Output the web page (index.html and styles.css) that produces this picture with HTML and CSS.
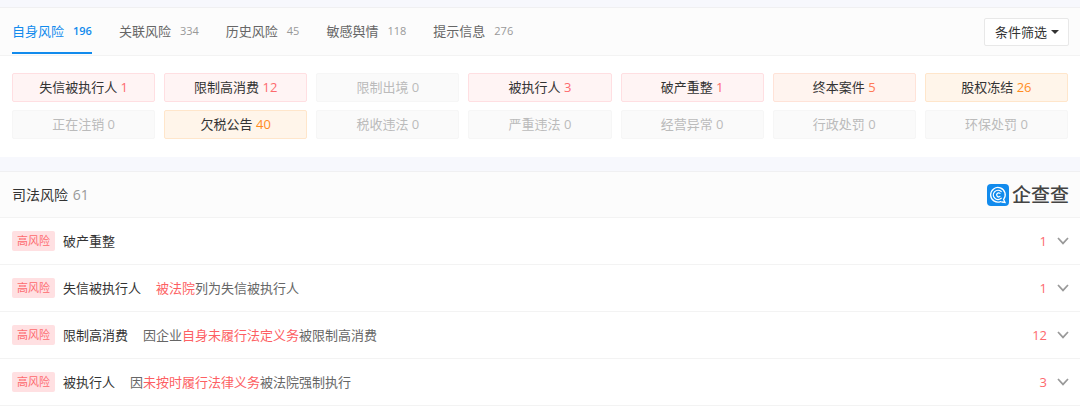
FILE: index.html
```html
<!DOCTYPE html>
<html lang="zh-CN">
<head>
    <meta charset="UTF-8">
    <meta name="viewport" content="width=device-width, initial-scale=1.0">
    <title>自身风险 - 企查查</title>
    <link rel="stylesheet" href="styles.css">
</head>
<body>
    <section class="panel">
        <div class="panel-header">
            <nav class="tabs">
                <a class="tab active" href="#self">自身风险 <span class="count">196</span></a>
                <a class="tab" href="#related">关联风险 <span class="count">334</span></a>
                <a class="tab" href="#history">历史风险 <span class="count">45</span></a>
                <a class="tab" href="#opinion">敏感舆情 <span class="count">118</span></a>
                <a class="tab" href="#notice">提示信息 <span class="count">276</span></a>
            </nav>
            <button class="filter" type="button" aria-haspopup="true">条件筛选<span class="caret"></span></button>
        </div>
        <div class="chips">
            <a class="chip red" href="#c1">失信被执行人 <span>1</span></a>
            <a class="chip red" href="#c2">限制高消费 <span>12</span></a>
            <a class="chip">限制出境 <span>0</span></a>
            <a class="chip red" href="#c4">被执行人 <span>3</span></a>
            <a class="chip red" href="#c5">破产重整 <span>1</span></a>
            <a class="chip coral" href="#c6">终本案件 <span>5</span></a>
            <a class="chip orange" href="#c7">股权冻结 <span>26</span></a>
            <a class="chip">正在注销 <span>0</span></a>
            <a class="chip orange" href="#c9">欠税公告 <span>40</span></a>
            <a class="chip">税收违法 <span>0</span></a>
            <a class="chip">严重违法 <span>0</span></a>
            <a class="chip">经营异常 <span>0</span></a>
            <a class="chip">行政处罚 <span>0</span></a>
            <a class="chip">环保处罚 <span>0</span></a>
        </div>
    </section>

    <section class="panel">
        <div class="section-header">
            <h2>司法风险 <span>61</span></h2>
            <div class="logo">
                <svg width="22" height="22" viewBox="0 0 22 22" aria-hidden="true">
                    <rect width="22" height="22" rx="4" fill="#128bed"/>
                    <g fill="none" stroke="#fff" stroke-linecap="round">
                        <path d="M13.6 17.6A7.3 7.3 0 1 1 16.6 15.4L18 18.4L14.8 18" stroke-width="1.3"/>
                        <path d="M14.2 7.6A4.6 4.6 0 1 0 14.2 14.2" stroke-width="1.3"/>
                        <path d="M13 9.4A2 2 0 1 0 13 12.4" stroke-width="1.2"/>
                    </g>
                </svg>
                <span>企查查</span>
            </div>
        </div>
        <ul class="risks">
            <li>
                <span class="badge">高风险</span>
                <span class="name">破产重整</span>
                <span class="desc"></span>
                <span class="num">1</span>
                <button class="toggle" type="button" aria-label="展开"><svg width="12" height="8" viewBox="0 0 12 8"><path d="M1 1L6 6.4L11 1"/></svg></button>
            </li>
            <li>
                <span class="badge">高风险</span>
                <span class="name">失信被执行人</span>
                <span class="desc"><em>被法院</em>列为失信被执行人</span>
                <span class="num">1</span>
                <button class="toggle" type="button" aria-label="展开"><svg width="12" height="8" viewBox="0 0 12 8"><path d="M1 1L6 6.4L11 1"/></svg></button>
            </li>
            <li>
                <span class="badge">高风险</span>
                <span class="name">限制高消费</span>
                <span class="desc">因企业<em>自身未履行法定义务</em>被限制高消费</span>
                <span class="num">12</span>
                <button class="toggle" type="button" aria-label="展开"><svg width="12" height="8" viewBox="0 0 12 8"><path d="M1 1L6 6.4L11 1"/></svg></button>
            </li>
            <li>
                <span class="badge">高风险</span>
                <span class="name">被执行人</span>
                <span class="desc">因<em>未按时履行法律义务</em>被法院强制执行</span>
                <span class="num">3</span>
                <button class="toggle" type="button" aria-label="展开"><svg width="12" height="8" viewBox="0 0 12 8"><path d="M1 1L6 6.4L11 1"/></svg></button>
            </li>
        </ul>
    </section>
</body>
</html>
```
FILE: styles.css
```css
* {
    box-sizing: border-box;
}
body {
    margin: 0;
    padding-top: 7px;
    background-color: #f7f8fd;
    color: #333;
    font-family: "Open Sans", "Noto Sans CJK SC", sans-serif;
    font-size: 13px;
    line-height: 20px;
}
a {
    color: inherit;
    text-decoration: none;
}
button {
    font: inherit;
    color: inherit;
    cursor: pointer;
}
.panel {
    background-color: #fff;
    border-top: 1px solid #f0f0f2;
    margin-bottom: 14px;
}
.panel:last-child {
    margin-bottom: 0;
    padding-bottom: 3px;
}
.panel-header {
    display: flex;
    justify-content: space-between;
    align-items: center;
    height: 48px;
    padding: 0 11px 0 12px;
    background-color: #fcfcfc;
    border-bottom: 1px solid #f3f3f3;
}
.tabs {
    display: flex;
    align-self: stretch;
    gap: 27px;
}
.tab {
    display: flex;
    align-items: center;
    gap: 9px;
    height: 46px;
    padding-top: 2px;
    border-bottom: 2px solid transparent;
    color: #666;
}
.tab .count {
    font-size: 11px;
    color: #999;
}
.tab.active {
    border-bottom-color: #128bed;
}
.tab.active,
.tab.active .count {
    color: #128bed;
}
.tab.active .count {
    font-weight: 600;
}
.filter {
    display: flex;
    align-items: center;
    gap: 4px;
    height: 28px;
    padding: 0 9px 0 10px;
    background-color: #fff;
    border: 1px solid #e8e8e8;
    border-radius: 2px;
}
.caret {
    border-top: 4px solid #333;
    border-left: 4px solid transparent;
    border-right: 4px solid transparent;
}
.chips {
    display: grid;
    grid-template-columns: repeat(7, 1fr);
    gap: 8px 9px;
    padding: 17px 12px 18px;
}
.chip {
    height: 29px;
    line-height: 27px;
    text-align: center;
    color: #bbb;
    background-color: #fafafa;
    border: 1px solid #f6f6f6;
    border-radius: 2px;
}
.chip.red {
    color: #333;
    background-color: #fff4f4;
    border-color: #ffdfe2;
}
.chip.red span {
    color: #fd6a6e;
}
.chip.coral {
    color: #333;
    background-color: #fff4ef;
    border-color: #ffe3d8;
}
.chip.coral span {
    color: #ff7a55;
}
.chip.orange {
    color: #333;
    background-color: #fff5ea;
    border-color: #ffe6cb;
}
.chip.orange span {
    color: #ff8c1f;
}
.section-header {
    display: flex;
    justify-content: space-between;
    align-items: center;
    height: 46px;
    padding: 0 11px 0 12px;
    background-color: #fcfcfc;
    border-bottom: 1px solid #f3f3f3;
}
.section-header h2 {
    margin: 0;
    font-size: 14px;
    font-weight: normal;
}
.section-header h2 span {
    margin-left: 1px;
    color: #999;
}
.logo {
    display: flex;
    align-items: center;
    gap: 3px;
    font-size: 19px;
    font-weight: 500;
    color: #444;
}
.risks {
    list-style: none;
    margin: 0;
    padding: 0;
}
.risks li {
    display: flex;
    align-items: center;
    height: 47px;
    padding: 0 11px 0 12px;
    border-bottom: 1px solid #f3f3f3;
}
.badge {
    padding: 0 5px;
    font-size: 11px;
    color: #fd6a6e;
    background-color: #ffe0e2;
    border-radius: 2px;
}
.name {
    margin-left: 8px;
}
.desc {
    flex: 1;
    margin-left: 15px;
    color: #666;
}
.desc em {
    font-style: normal;
    color: #fd5f63;
}
.num {
    color: #fd6a6e;
}
.toggle {
    display: flex;
    margin-left: 10px;
    padding: 0;
    background: none;
    border: none;
}
.toggle path {
    fill: none;
    stroke: #999;
    stroke-width: 1.7;
}
```
